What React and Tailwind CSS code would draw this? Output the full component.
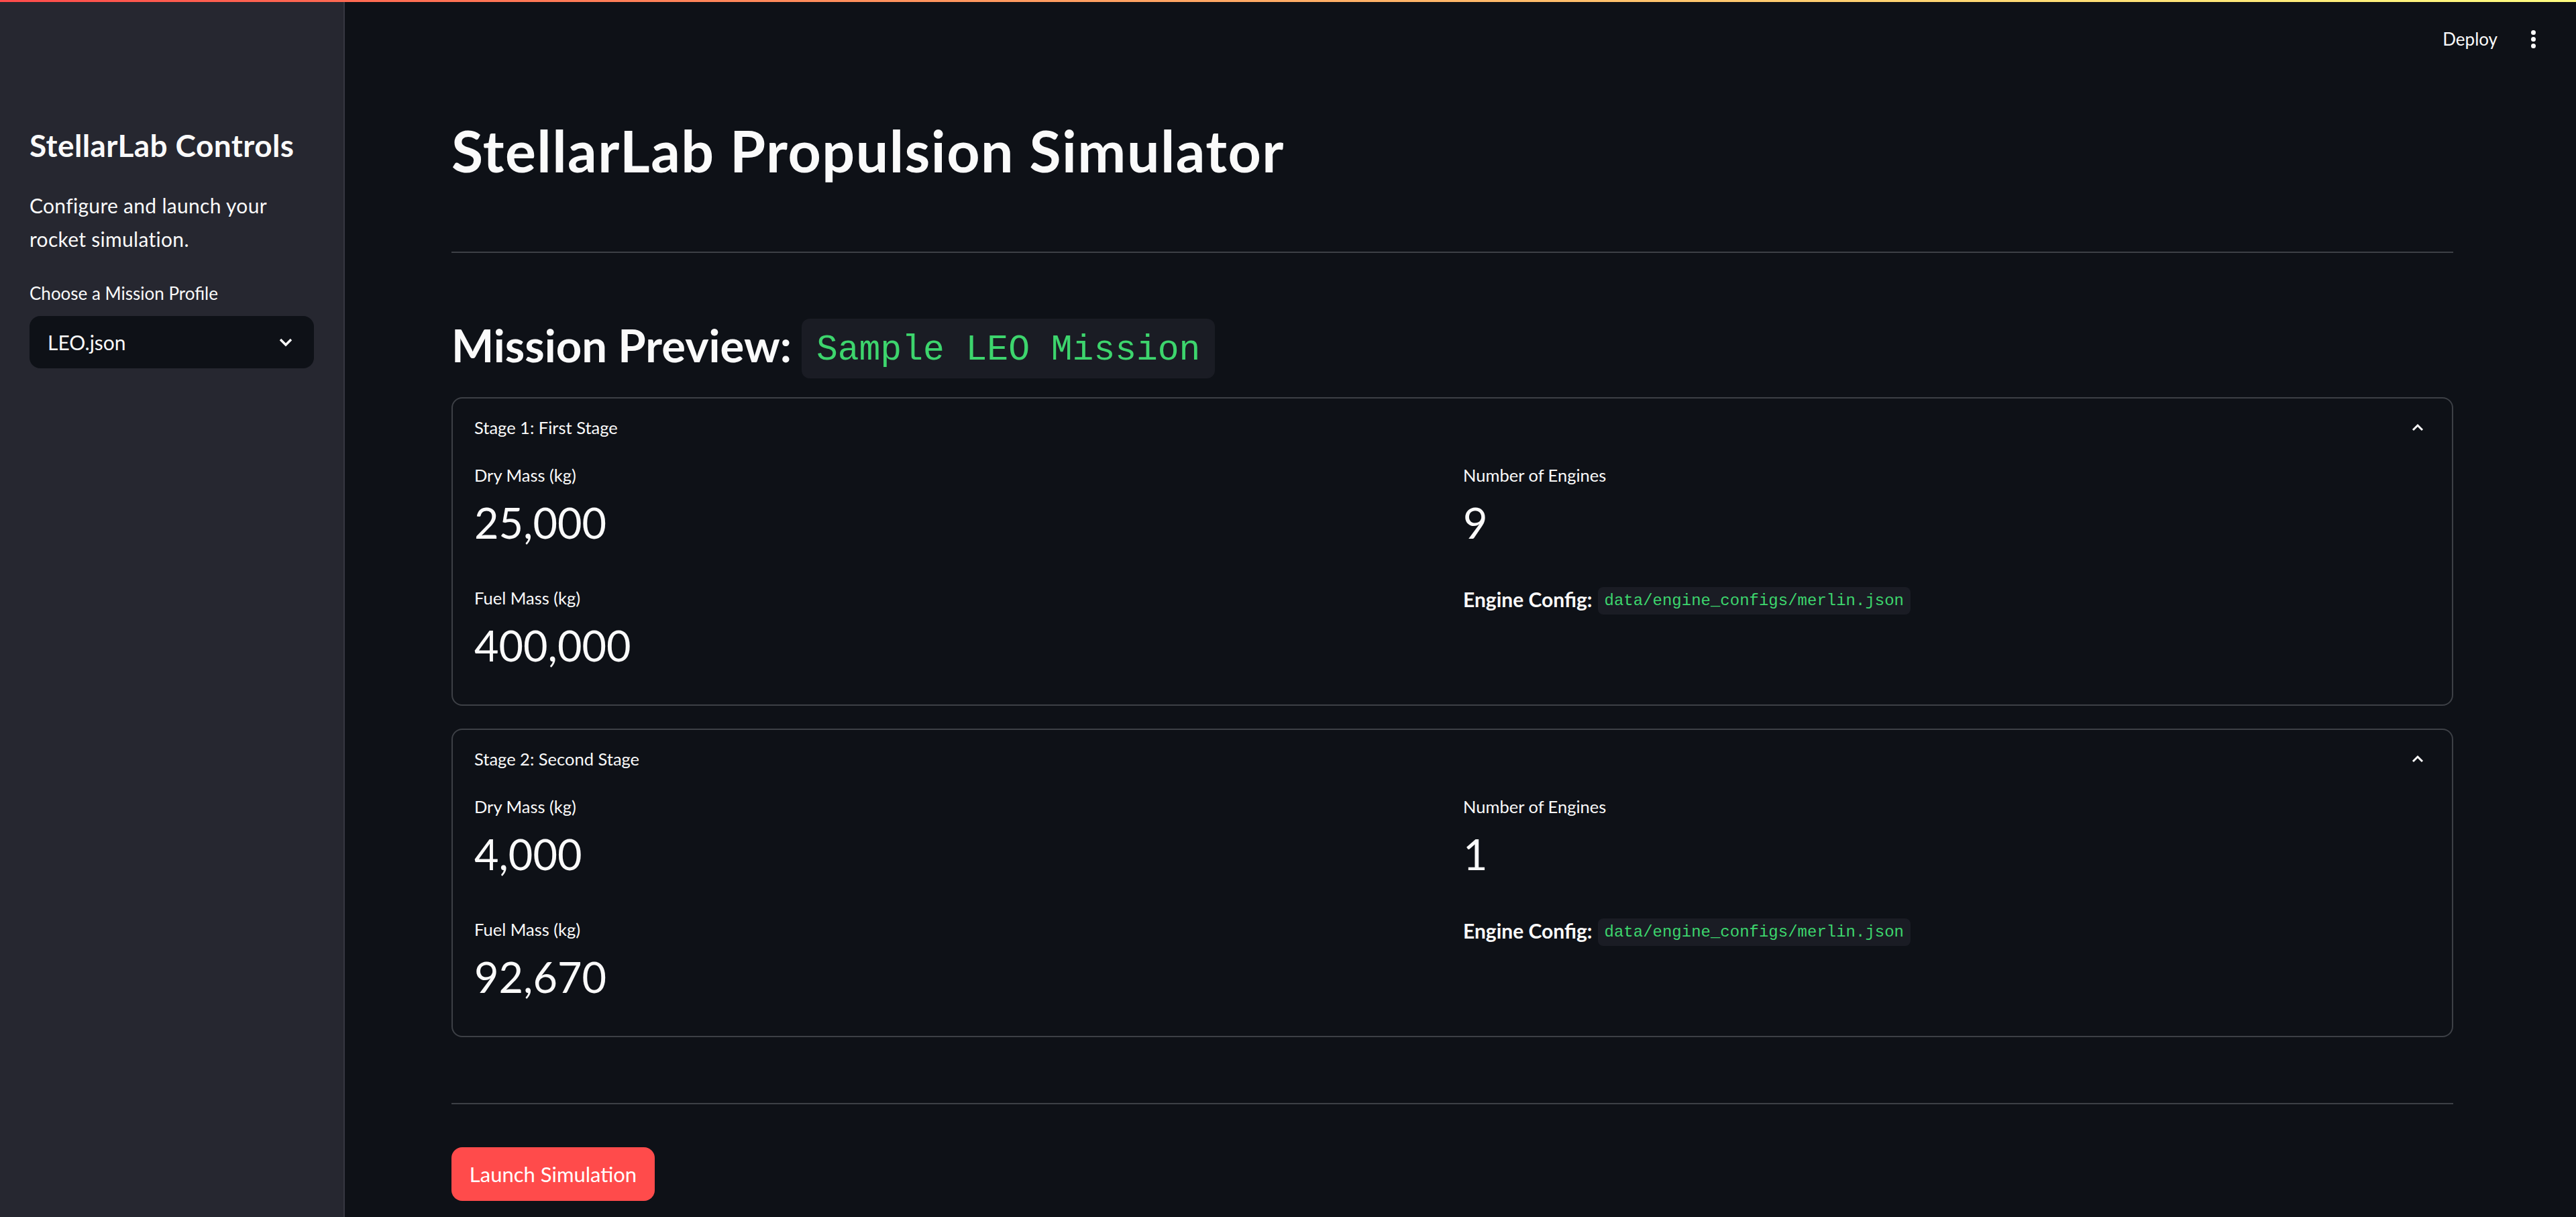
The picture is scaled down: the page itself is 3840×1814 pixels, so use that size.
import React from 'react';

const sans = { fontFamily: 'Lato, "Noto Sans", sans-serif' };

const stages = [
  {
    title: 'Stage 1: First Stage',
    dry: '25,000',
    fuel: '400,000',
    engines: '9',
    config: 'data/engine_configs/merlin.json',
  },
  {
    title: 'Stage 2: Second Stage',
    dry: '4,000',
    fuel: '92,670',
    engines: '1',
    config: 'data/engine_configs/merlin.json',
  },
];

const Metric = ({ label, value }) => (
  <div>
    <div className="text-[25.5px] leading-[40px] text-[#fafafa]">{label}</div>
    <div className="mt-[11px] text-[63px] leading-[80px] text-[#fafafa]">{value}</div>
  </div>
);

const StageCard = ({ stage }) => (
  <div className="rounded-[16px] border-2 border-[#3d4046] px-[32px] pt-[23px] pb-[48px]">
    {/* expander header */}
    <div className="flex h-[40px] items-center justify-between">
      <span className="text-[25.5px] text-[#fafafa]">{stage.title}</span>
      <svg width="18" height="12" viewBox="0 0 18 12" className="mr-[10px]">
        <polyline points="2,10 9,3 16,10" fill="none" stroke="#fafafa" strokeWidth="3" />
      </svg>
    </div>

    <div className="mt-[31px] grid grid-cols-2 gap-x-[32px]">
      <div>
        <Metric label="Dry Mass (kg)" value={stage.dry} />
        <div className="mt-[52px]">
          <Metric label="Fuel Mass (kg)" value={stage.fuel} />
        </div>
      </div>
      <div>
        <Metric label="Number of Engines" value={stage.engines} />
        <div className="mt-[56px] flex h-[41px] items-center gap-[8px]">
          <span className="pb-[5px] text-[30px] font-bold text-[#fafafa]">Engine Config:</span>
          <code
            className="flex h-[41px] items-center rounded-[8px] bg-[#1a1c24] px-[10px] text-[24px] text-[#3dd56d]"
            style={{ fontFamily: '"Liberation Mono", monospace' }}
          >
            {stage.config}
          </code>
        </div>
      </div>
    </div>
  </div>
);

export default function App() {
  return (
    <div className="relative flex h-[1814px] w-full overflow-hidden bg-[#0e1117]" style={sans}>
      {/* header decoration */}
      <div className="absolute inset-x-0 top-0 z-10 h-[3px] bg-gradient-to-r from-[#ff4b4b] to-[#fffd80]" />

      {/* Sidebar */}
      <aside className="w-[514px] shrink-0 border-r-2 border-[#363741] bg-[#262730] pl-[44px] pr-[30px]">
        <h2 className="mt-[187px] text-[46px] font-bold leading-[60px] tracking-[0.4px] text-[#fafafa]">
          StellarLab Controls
        </h2>
        <p className="mt-[34px] w-[400px] text-[30px] leading-[50px] tracking-[0.3px] text-[#fafafa]">
          Configure and launch your rocket simulation.
        </p>
        <div className="mt-[38px] text-[26px] leading-[36px] text-[#fafafa]">Choose a Mission Profile</div>
        <div className="mt-[16px] flex h-[78px] w-[424px] items-center justify-between rounded-[16px] bg-[#0e1117] pl-[27px] pr-[32px]">
          <span className="text-[30px] text-[#fafafa]">LEO.json</span>
          <svg width="20" height="13" viewBox="0 0 20 13">
            <polyline points="2,2 10,10 18,2" fill="none" stroke="#fafafa" strokeWidth="3.5" />
          </svg>
        </div>
      </aside>

      {/* Main */}
      <main className="flex-1">
        <header className="flex h-[116px] items-center justify-end gap-[49px] pr-[60px]">
          <span className="text-[26px] text-[#fafafa]">Deploy</span>
          <div className="flex w-[8px] flex-col items-center gap-[3px]">
            <span className="h-[7px] w-[7px] rounded-full bg-[#fafafa]" />
            <span className="h-[7px] w-[7px] rounded-full bg-[#fafafa]" />
            <span className="h-[7px] w-[7px] rounded-full bg-[#fafafa]" />
          </div>
        </header>

        <div className="ml-[159px] w-[2984px]">
          <h1 className="mt-[59px] text-[86px] font-bold leading-[98px] tracking-[1.5px] text-[#fafafa]">
            StellarLab Propulsion Simulator
          </h1>

          <hr className="mt-[102px] h-[2px] border-0 bg-[#3d4046]" />

          <div className="mt-[98px] flex h-[89px] items-center gap-[15px]">
            <h2 className="pb-[12px] text-[67px] font-bold leading-[90px] text-[#fafafa]">Mission Preview:</h2>
            <code
              className="flex h-[89px] items-center rounded-[12px] bg-[#1a1c24] px-[22px] pt-[6px] text-[53px] text-[#3dd56d]"
              style={{ fontFamily: '"Liberation Mono", monospace' }}
            >
              Sample LEO Mission
            </code>
          </div>

          <div className="mt-[28px] flex flex-col gap-[34px]">
            {stages.map((s) => (
              <StageCard key={s.title} stage={s} />
            ))}
          </div>

          <hr className="mt-[98px] h-[2px] border-0 bg-[#3d4046]" />

          <button className="mt-[64px] flex h-[80px] w-[303px] items-center justify-center rounded-[16px] bg-[#ff4b4b] text-[31px] text-white">
            Launch Simulation
          </button>
        </div>
      </main>
    </div>
  );
}
